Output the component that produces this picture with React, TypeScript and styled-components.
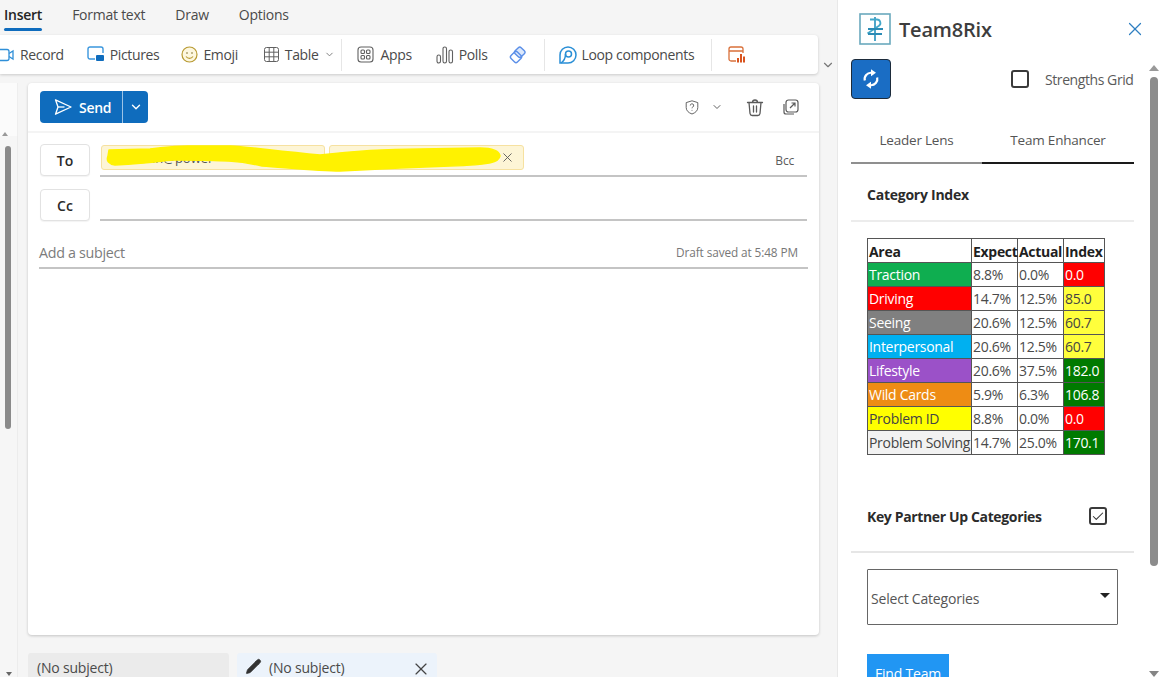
import React from "react";
import styled, { createGlobalStyle } from "styled-components";
import { ChevronDown, X, Check, Pencil } from "lucide-react";

const Global = createGlobalStyle`
  html, body { margin: 0; padding: 0; background: #f5f5f5; }
  * { box-sizing: border-box; }
  body { font-family: "Open Sans", "Noto Sans", "Liberation Sans", sans-serif; color: #424242; }
`;

const Page = styled.div`
  width: 1160px; height: 677px; display: flex; overflow: hidden;
`;
const Main = styled.div`
  width: 838px; height: 677px; background: #f5f5f5; display: flex; flex-direction: column; flex: none; overflow: hidden;
  border-right: 1px solid #e8e8e8;
`;
const RibbonTabs = styled.div`
  height: 35px; display: flex; padding-left: 4px; gap: 30px; align-items: flex-start; padding-top: 5px;
`;
const RibbonTab = styled.div<{ $active?: boolean }>`
  font-size: 14px; line-height: 20px; height: 24px; letter-spacing: -0.25px;
  color: ${p => (p.$active ? "#242424" : "#4a4a4a")};
  font-weight: ${p => (p.$active ? 600 : 400)};
  position: relative;
  ${p => p.$active && `&::after { content: ""; position: absolute; left: 0; right: 0; bottom: -2px; height: 3px; border-radius: 2px; background: #0f6cbd; }`}
`;
const ToolbarRow = styled.div`
  display: flex; align-items: flex-start; height: 48px; flex: none;
`;
const Toolbar = styled.div`
  width: 818px; height: 39px; background: #fff; border-radius: 0 4px 4px 0; box-shadow: 0 1px 3px rgba(0,0,0,.18);
  display: flex; align-items: center; flex: none; position: relative;
`;
const Tool = styled.div<{ $x: number; $gap?: number }>`
  display: flex; align-items: center; gap: ${p => p.$gap ?? 5}px; font-size: 14px; letter-spacing: -0.36px; color: #4a4a4a; margin-left: ${p => p.$x}px; white-space: nowrap;
  svg { flex: none; }
`;
const Sep = styled.div<{ $x: number }>`
  width: 1px; height: 32px; background: #e6e6e6; margin-left: ${p => p.$x}px; flex: none;
`;
const MoreChevron = styled.div`
  margin-left: 3px; margin-top: 23px; color: #777; display: flex;
`;
const Work = styled.div`
  flex: 1; display: flex; min-height: 0;
`;
const FolderRail = styled.div`
  width: 18px; flex: none; display: flex; flex-direction: column; align-items: center; background: #f6f6f6;
`;
const RailTop = styled.div`
  width: 18px; height: 53px; background: #fbfbfb; border-right: 1px solid #eee; flex: none; display: flex; justify-content: center; align-items: flex-end;
  padding-right: 8px;
`;
const RailBody = styled.div`
  flex: 1; width: 18px; padding-left: 5px; padding-top: 10px; background: #f6f6f6; border-right: 1px solid #ececec; display: flex; flex-direction: column; justify-content: space-between;
`;
const RailThumb = styled.div`
  width: 6px; height: 283px; background: #8a8a8a; border-radius: 3px;
`;
const Arrow = styled.div<{ $down?: boolean; $c?: string }>`
  width: 0; height: 0; border-left: 5px solid transparent; border-right: 5px solid transparent;
  ${p => p.$down ? `border-top: 6px solid ${p.$c || "#858585"};` : `border-bottom: 6px solid ${p.$c || "#999"};`}
`;
const SmallUp = styled(Arrow)`
  border-left-width: 3px; border-right-width: 3px; border-bottom-width: 4px;
`;
const SmallDown = styled(Arrow)`
  border-left-width: 3px; border-right-width: 3px; border-top-width: 4px; margin-left: 1px; margin-bottom: 1px;
`;
const ComposeCol = styled.div`
  margin-left: 10px; width: 791px; display: flex; flex-direction: column; flex: none;
`;
const Compose = styled.div`
  height: 552px; background: #fff; border-radius: 4px; box-shadow: 0 1px 3px rgba(0,0,0,.2); flex: none; display: flex; flex-direction: column;
`;
const ActionRow = styled.div`
  height: 50px; flex: none; display: flex; align-items: center; padding: 0 20px 0 12px; border-bottom: 2px solid #f4f4f4;
`;
const SendBtn = styled.div`
  width: 108px; height: 32px; background: #0f6cbd; border-radius: 4px; color: #fff; display: flex; align-items: center; font-size: 14px; font-weight: 600; letter-spacing: -0.3px;
`;
const SendMain = styled.div`
  width: 83px; height: 32px; display: flex; align-items: center; gap: 7px; padding-left: 14px; border-right: 1px solid #9cc3e6; flex: none;
`;
const SendCaret = styled.div`
  flex: 1; display: flex; justify-content: center; align-items: center;
`;
const RightIcons = styled.div`
  margin-left: auto; display: flex; align-items: center; color: #616161;
`;
const IconSlot = styled.span<{ $x: number }>`
  display: flex; margin-left: ${p => p.$x}px;
`;
const Row = styled.div<{ $top: number }>`
  display: flex; align-items: flex-start; padding-left: 12px; padding-right: 12px; margin-top: ${p => p.$top}px;
`;
const RecipientBtn = styled.div`
  width: 50px; height: 32px; border: 1px solid #e2e2e2; border-radius: 4px; background: #fff; display: flex; align-items: center; justify-content: center; font-size: 14px; font-weight: 600; color: #2b2b2b; flex: none; box-shadow: 0 1px 1px rgba(0,0,0,.05);
`;
const Line = styled.div<{ $h: number }>`
  margin-left: 10px; width: 707px; height: ${p => p.$h}px; border-bottom: 2px solid #c4c4c4; display: flex; align-items: flex-start; position: relative; padding-left: 1px; padding-top: 1px; gap: 4px; flex: none;
`;
const Chip = styled.div<{ $w: number }>`
  width: ${p => p.$w}px; height: 25px; background: #fdf5d6; border: 1px solid #f6e1a0; border-radius: 3px; display: flex; align-items: center; justify-content: space-between; padding: 0 8px 0 50px; color: #555; flex: none; font-size: 13px; overflow: hidden; white-space: nowrap;
`;
const Bcc = styled.div`
  position: absolute; right: 13px; top: 8px; font-size: 12px; color: #5c5c5c; letter-spacing: -0.2px;
`;
const Scribble = styled.svg`
  position: absolute; left: 0; top: 0; pointer-events: none;
`;
const SubjectRow = styled.div`
  margin: 14px 12px 0 11px; width: 769px; height: 34px; border-bottom: 2px solid #c4c4c4; display: flex; align-items: center; justify-content: space-between; padding: 2px 10px 0 0;
`;
const SubjectText = styled.div`
  font-size: 14.3px; color: #7c7c7c; letter-spacing: -0.3px;
`;
const Saved = styled.div`
  font-size: 11.8px; color: #777; letter-spacing: -0.1px;
`;
const Drafts = styled.div`
  display: flex; margin-top: 18px; gap: 8px; height: 40px; flex: none;
`;
const Draft = styled.div<{ $active?: boolean }>`
  width: ${p => (p.$active ? 200 : 201)}px; height: 40px; border-radius: 3px 3px 0 0; background: ${p => (p.$active ? "#ecf3fb" : "#ebebeb")};
  display: flex; align-items: flex-start; padding-top: 5px; padding-left: ${p => (p.$active ? 8 : 9)}px; font-size: 14px; color: #4a4a4a; gap: 7px; letter-spacing: -0.2px; line-height: 20px;
`;
const DraftClose = styled.div`
  margin-left: auto; margin-right: 6px; margin-top: 1px; color: #444; display: flex;
`;
const Panel = styled.div`
  flex: 1; height: 677px; background: #fff; display: flex; flex-direction: column; overflow: hidden;
`;
const PanelHead = styled.div`
  height: 59px; flex: none; display: flex; align-items: flex-start; padding: 13px 14px 0 21px;
`;
const Title = styled.div`
  margin-left: 8px; font-size: 20px; font-weight: 600; color: #3d3d3d; line-height: 34px; letter-spacing: -0.2px;
`;
const CloseBtn = styled.div`
  margin-left: auto; margin-top: 5px; color: #2f7fc1; display: flex;
`;
const PanelBody = styled.div`
  flex: 1; display: flex; min-height: 0;
`;
const PanelContent = styled.div`
  width: 296px; flex: none; padding-left: 13px; display: flex; flex-direction: column; overflow: hidden;
`;
const Scrollbar = styled.div`
  margin-left: 15px; width: 10px; flex: none; display: flex; flex-direction: column; align-items: center; padding-top: 6px; height: 618px;
`;
const Thumb = styled.div`
  width: 8px; height: 489px; border-radius: 4px; background: #8c8c8c; margin-top: 6px;
`;
const Spacer = styled.div`flex: 1;`;
const TopRow = styled.div`
  display: flex; align-items: center; height: 40px; flex: none; width: 283px;
`;
const Refresh = styled.div`
  width: 40px; height: 40px; background: #1a6dc4; border: 1.5px solid #1d2b3a; border-radius: 4px; display: flex; align-items: center; justify-content: center; flex: none;
`;
const Box = styled.div<{ $x: number }>`
  width: 18px; height: 18px; border: 2px solid #3a3a3a; border-radius: 3px; margin-left: ${p => p.$x}px; display: flex; align-items: center; justify-content: center; color: #333; flex: none;
`;
const GridLabel = styled.div`
  margin-left: 16px; font-size: 14px; color: #5a5a5a; letter-spacing: -0.42px; white-space: nowrap;
`;
const Tabs = styled.div`
  display: flex; margin-top: 26px; height: 39px; width: 283px; flex: none;
`;
const PanelTab = styled.div<{ $active?: boolean; $w: number }>`
  width: ${p => p.$w}px; display: flex; align-items: center; justify-content: center; font-size: 13.5px; color: #555; letter-spacing: -0.2px;
  border-bottom: 2px solid ${p => (p.$active ? "#1a1a1a" : "#8f8f8f")}; padding-bottom: 7px;
`;
const Section = styled.div`
  width: 283px; height: 58px; flex: none; border-bottom: 2px solid #ececec; padding: 4px 0 0 16px; display: flex; align-items: center; font-size: 14px; font-weight: 700; color: #2b2b2b; letter-spacing: -0.25px;
`;
const IndexTable = styled.table`
  border-collapse: collapse; margin: 16px 0 0 16px; width: 237px; table-layout: fixed; flex: none; font-size: 14px; letter-spacing: -0.3px; line-height: 20px;
`;
const Th = styled.th<{ $w: number }>`
  width: ${p => p.$w}px; height: 24px; border: 1.5px solid #555; padding: 2px 0 0 1px; text-align: left; font-weight: 700; color: #1f1f1f; white-space: nowrap; overflow: visible;
`;
const Td = styled.td<{ $bg?: string; $c?: string }>`
  height: 24px; border: 1.5px solid #555; padding: 0 0 0 1px; background: ${p => p.$bg || "#fff"}; color: ${p => p.$c || "#4a4a4a"}; white-space: nowrap; overflow: hidden;
`;
const PartnerRow = styled.div`
  width: 283px; height: 65px; margin-top: 33px; flex: none; border-bottom: 2px solid #e6e6e6; display: flex; align-items: center; padding: 0 0 7px 16px; font-size: 14px; font-weight: 700; color: #2b2b2b; letter-spacing: -0.36px;
`;
const SelectBox = styled.div`
  margin: 16px 0 0 16px; width: 251px; height: 56px; border: 1.5px solid #666; border-radius: 1px; display: flex; align-items: center; padding: 3px 7px 0 3px; font-size: 14px; color: #555; letter-spacing: -0.2px; flex: none; justify-content: space-between;
`;
const Caret = styled.div`
  width: 0; height: 0; border-left: 5px solid transparent; border-right: 5px solid transparent; border-top: 5px solid #222; margin-bottom: 7px;
`;
const FindBtn = styled.div`
  margin: 29px 0 0 16px; width: 82px; height: 40px; background: #2196f3; color: #fff; font-size: 14px; display: flex; justify-content: center; padding-top: 10px; flex: none; letter-spacing: -0.2px;
`;

const rows = [
  ["Traction", "#0fae50", "#fff", "8.8%", "0.0%", "0.0", "#ff0000", "#fff"],
  ["Driving", "#ff0000", "#fff", "14.7%", "12.5%", "85.0", "#ffff3c", "#444"],
  ["Seeing", "#808080", "#fff", "20.6%", "12.5%", "60.7", "#ffff3c", "#444"],
  ["Interpersonal", "#00b0f0", "#fff", "20.6%", "12.5%", "60.7", "#ffff3c", "#444"],
  ["Lifestyle", "#9b51c8", "#fff", "20.6%", "37.5%", "182.0", "#007a00", "#fff"],
  ["Wild Cards", "#ee8c14", "#fff", "5.9%", "6.3%", "106.8", "#007a00", "#fff"],
  ["Problem ID", "#ffff00", "#444", "8.8%", "0.0%", "0.0", "#ff0000", "#fff"],
  ["Problem Solving", "#f2f2f2", "#444", "14.7%", "25.0%", "170.1", "#007a00", "#fff"],
];

const RecordIcon = () => (
  <svg width="15" height="16" viewBox="0 0 15 16" fill="none" stroke="#2f8fd8" strokeWidth="1.3"><rect x="-4" y="2.5" width="13" height="11" rx="2" /><path d="M9 6.5l4-2.5v8l-4-2.5" /></svg>
);
const PicturesIcon = () => (
  <svg width="18" height="17" viewBox="0 0 18 17" fill="none"><path d="M8 13H3a2 2 0 0 1-2-2V3a2 2 0 0 1 2-2h11a2 2 0 0 1 2 2v4" stroke="#3a96dd" strokeWidth="1.4" /><rect x="9" y="9" width="8" height="6" rx="1" fill="#0f6cbd" /></svg>
);
const EmojiIcon = () => (
  <svg width="17" height="17" viewBox="0 0 17 17" fill="none" stroke="#b89a32" strokeWidth="1.2"><circle cx="8.5" cy="8.5" r="7.5" fill="#fdf7df" /><circle cx="6" cy="7" r=".8" fill="#7a6a20" stroke="none" /><circle cx="11" cy="7" r=".8" fill="#7a6a20" stroke="none" /><path d="M5 10.5c1.8 2.4 5.2 2.4 7 0" /></svg>
);
const GridIcon = () => (
  <svg width="15" height="15" viewBox="0 0 15 15" fill="none" stroke="#616161" strokeWidth="1"><rect x=".5" y=".5" width="14" height="14" rx="2" /><path d="M5.2 .5v14M9.800 .5v14M.5 5.200h14M.5 9.800h14" /></svg>
);
const AppsIcon = () => (
  <svg width="17" height="17" viewBox="0 0 17 17" fill="none" stroke="#616161" strokeWidth="1.1"><rect x="1" y="1" width="15" height="15" rx="3" /><rect x="4" y="4" width="3.5" height="3.5" rx="1" /><rect x="9.5" y="4" width="3.5" height="3.5" rx="1" /><rect x="4" y="9.5" width="3.5" height="3.5" rx="1" /><rect x="9.5" y="9.5" width="3.5" height="3.5" rx="1" /></svg>
);
const PollsIcon = () => (
  <svg width="18" height="18" viewBox="0 0 18 18" fill="none" stroke="#616161" strokeWidth="1.1"><rect x="1" y="9" width="3.5" height="8" rx="1.7" /><rect x="7" y="1" width="3.5" height="16" rx="1.7" /><rect x="13" y="4" width="3.5" height="13" rx="1.7" /></svg>
);
const DiamondIcon = () => (
  <svg width="18" height="18" viewBox="0 0 18 18" fill="none" stroke="#5b8fe8" strokeWidth="1.4">
    <rect x="6.500" y="2" width="8.500" height="8.500" rx="2" transform="rotate(45 10.750 6.250)" fill="#dce8fb" />
    <rect x="2.500" y="6.500" width="9" height="9" rx="2" transform="rotate(45 7 11)" />
  </svg>
);
const LoopIcon = () => (
  <svg width="18" height="18" viewBox="0 0 18 18" fill="none" stroke="#2a8fd6" strokeWidth="1.5"><path d="M1 17V9a8 8 0 1 1 8 8H1z" /><circle cx="9.500" cy="8" r="3" /><path d="M6.500 8C6.500 12 5 15 2 17" /></svg>
);
const ChartIcon = () => (
  <svg width="18" height="18" viewBox="0 0 18 18" fill="none"><path d="M8 15H3a2 2 0 0 1-2-2V3a2 2 0 0 1 2-2h10a2 2 0 0 1 2 2v4M1 5h14" stroke="#d9703a" strokeWidth="1.3" /><rect x="9" y="12" width="2" height="4.5" fill="#d9541e" /><rect x="12" y="8" width="2" height="8.5" fill="#d9541e" /><rect x="15" y="10.500" width="2" height="6" fill="#d9541e" /></svg>
);
const ShieldIcon = () => (
  <svg width="14" height="15" viewBox="0 0 14 15" fill="none" stroke="#666" strokeWidth="1"><path d="M7 .8l5.8 1.8v5c0 3.200-2.500 5.200-5.800 6.400C3.700 12.800 1.200 10.800 1.200 7.600v-5z" /><path d="M5.300 5.500a1.700 1.700 0 1 1 2.500 1.500c-.6.3-.8.6-.8 1.300" /><circle cx="7" cy="10.200" r=".5" fill="#666" stroke="none" /></svg>
);
const TrashIcon = () => (
  <svg width="18" height="19" viewBox="0 0 18 19" fill="none" stroke="#5a5a5a" strokeWidth="1.3" strokeLinecap="round"><path d="M1.500 4.500h15M6.500 4.500a2.500 2.500 0 0 1 5 0M3 4.500l1 11a2.300 2.300 0 0 0 2.300 2h5.400a2.300 2.300 0 0 0 2.300-2l1-11M7.500 8v6M10.500 8v6" /></svg>
);
const PopoutIcon = () => (
  <svg width="16" height="16" viewBox="0 0 16 16" fill="none" stroke="#5a5a5a" strokeWidth="1.2"><path d="M1 5v8a2 2 0 0 0 2 2h8" /><rect x="3" y="1" width="12" height="12" rx="2.500" /><path d="M7 9l5-5M8.500 4H12v3.500" /></svg>
);
const SendGlyph = () => (
  <svg width="18" height="18" viewBox="0 0 18 18" fill="none" stroke="#fff" strokeWidth="1.3" strokeLinejoin="round"><path d="M1.500 1.800L17 9 1.500 16.200 4 9z" /><path d="M4 9h6.500" /></svg>
);
const SyncIcon = () => (
  <svg width="20" height="20" viewBox="0 0 20 20" fill="none" stroke="#fff" strokeWidth="2.2"><path d="M3.800 11.500A6.300 6.300 0 0 1 10.500 3.800" /><path d="M16.200 8.500A6.300 6.300 0 0 1 9.500 16.200" /><path d="M10 .3L15 3.800 10 7.300z" fill="#fff" stroke="none" /><path d="M10 12.700L5 16.200 10 19.700z" fill="#fff" stroke="none" /></svg>
);
const LogoIcon = () => (
  <svg width="32" height="32" viewBox="0 0 32 32" fill="none"><rect x="1" y="1" width="30" height="30" fill="#fff" stroke="#6aa9bd" strokeWidth="1.6" /><path d="M16 4v24" stroke="#3b9cc4" strokeWidth="1.8" /><path d="M11 6.500h7a3.500 3.500 0 0 1 2 6.300L8.500 20.500" stroke="#43a7c9" strokeWidth="1.8" /><path d="M9 16h15M9 21h14" stroke="#2b8bb5" strokeWidth="1.8" /></svg>
);

export default function App() {
  return (
    <Page>
      <Global />
      <Main>
        <RibbonTabs>
          <RibbonTab $active>Insert</RibbonTab>
          <RibbonTab>Format text</RibbonTab>
          <RibbonTab>Draw</RibbonTab>
          <RibbonTab>Options</RibbonTab>
        </RibbonTabs>
        <ToolbarRow>
          <Toolbar>
            <Tool $x={0}><RecordIcon />Record</Tool>
            <Tool $x={23}><PicturesIcon />Pictures</Tool>
            <Tool $x={22}><EmojiIcon />Emoji</Tool>
            <Tool $x={26} $gap={6}><GridIcon />Table<ChevronDown size={11} color="#777" /></Tool>
            <Sep $x={6} />
            <Tool $x={15} $gap={6}><AppsIcon />Apps</Tool>
            <Tool $x={24}><PollsIcon />Polls</Tool>
            <Tool $x={21}><DiamondIcon /></Tool>
            <Sep $x={17} />
            <Tool $x={14}><LoopIcon />Loop components</Tool>
            <Sep $x={17} />
            <Tool $x={16}><ChartIcon /></Tool>
          </Toolbar>
          <MoreChevron><ChevronDown size={14} /></MoreChevron>
        </ToolbarRow>
        <Work>
          <FolderRail>
            <RailTop><SmallUp /></RailTop>
            <RailBody><RailThumb /><SmallDown $c="#666" $down /></RailBody>
          </FolderRail>
          <ComposeCol>
            <Compose>
              <ActionRow>
                <SendBtn>
                  <SendMain><SendGlyph />Send</SendMain>
                  <SendCaret><ChevronDown size={14} strokeWidth={2.4} /></SendCaret>
                </SendBtn>
                <RightIcons>
                  <ShieldIcon />
                  <IconSlot $x={12}><ChevronDown size={12} /></IconSlot>
                  <IconSlot $x={23}><TrashIcon /></IconSlot>
                  <IconSlot $x={19}><PopoutIcon /></IconSlot>
                </RightIcons>
              </ActionRow>
              <Row $top={11}>
                <RecipientBtn>To</RecipientBtn>
                <Line $h={33}>
                  <Chip $w={224}>in@power<X size={12} color="#666" /></Chip>
                  <Chip $w={195}><span /><X size={15} color="#555" strokeWidth={1.4} /></Chip>
                  <Scribble width="420" height="30" viewBox="0 0 420 30">
                    <path d="M9 6L50 5C62 4 70 2 88 2L130 2C150 3 175 7 220 11C245 8 280 5 320 5L380 4C392 4 399 7 400 12C399 18 392 21 350 22L300 24L240 27C220 27 190 24 162 22C140 17 125 16 75 16C65 16 58 19 15 21C9 20 6 17 8 12Z" fill="#fff200" stroke="#fff200" strokeWidth="1.5" strokeLinejoin="round" />
                  </Scribble>
                  <Bcc>Bcc</Bcc>
                </Line>
              </Row>
              <Row $top={12}>
                <RecipientBtn>Cc</RecipientBtn>
                <Line $h={32} />
              </Row>
              <SubjectRow>
                <SubjectText>Add a subject</SubjectText>
                <Saved>Draft saved at 5:48 PM</Saved>
              </SubjectRow>
            </Compose>
            <Drafts>
              <Draft>(No subject)</Draft>
              <Draft $active>
                <Pencil size={17} fill="#333" color="#333" strokeWidth={1} />
                (No subject)
                <DraftClose><X size={20} strokeWidth={1.4} /></DraftClose>
              </Draft>
            </Drafts>
          </ComposeCol>
        </Work>
      </Main>
      <Panel>
        <PanelHead>
          <LogoIcon />
          <Title>Team8Rix</Title>
          <CloseBtn><X size={22} strokeWidth={1.3} /></CloseBtn>
        </PanelHead>
        <PanelBody>
          <PanelContent>
            <TopRow>
              <Refresh><SyncIcon /></Refresh>
              <Box $x={120} />
              <GridLabel>Strengths Grid</GridLabel>
            </TopRow>
            <Tabs>
              <PanelTab $w={131}>Leader Lens</PanelTab>
              <PanelTab $w={152} $active>Team Enhancer</PanelTab>
            </Tabs>
            <Section>Category Index</Section>
            <IndexTable>
              <thead>
                <tr>
                  <Th $w={104}>Area</Th>
                  <Th $w={46}>Expect</Th>
                  <Th $w={46}>Actual</Th>
                  <Th $w={41}>Index</Th>
                </tr>
              </thead>
              <tbody>
                {rows.map(r => (
                  <tr key={r[0]}>
                    <Td $bg={r[1]} $c={r[2]}>{r[0]}</Td>
                    <Td>{r[3]}</Td>
                    <Td>{r[4]}</Td>
                    <Td $bg={r[6]} $c={r[7]}>{r[5]}</Td>
                  </tr>
                ))}
              </tbody>
            </IndexTable>
            <PartnerRow>
              Key Partner Up Categories
              <Box $x={47}><Check size={15} strokeWidth={1.8} /></Box>
            </PartnerRow>
            <SelectBox>Select Categories<Caret /></SelectBox>
            <FindBtn>Find Team</FindBtn>
          </PanelContent>
          <Scrollbar>
            <Arrow />
            <Thumb />
            <Spacer />
            <Arrow $down />
          </Scrollbar>
        </PanelBody>
      </Panel>
    </Page>
  );
}
